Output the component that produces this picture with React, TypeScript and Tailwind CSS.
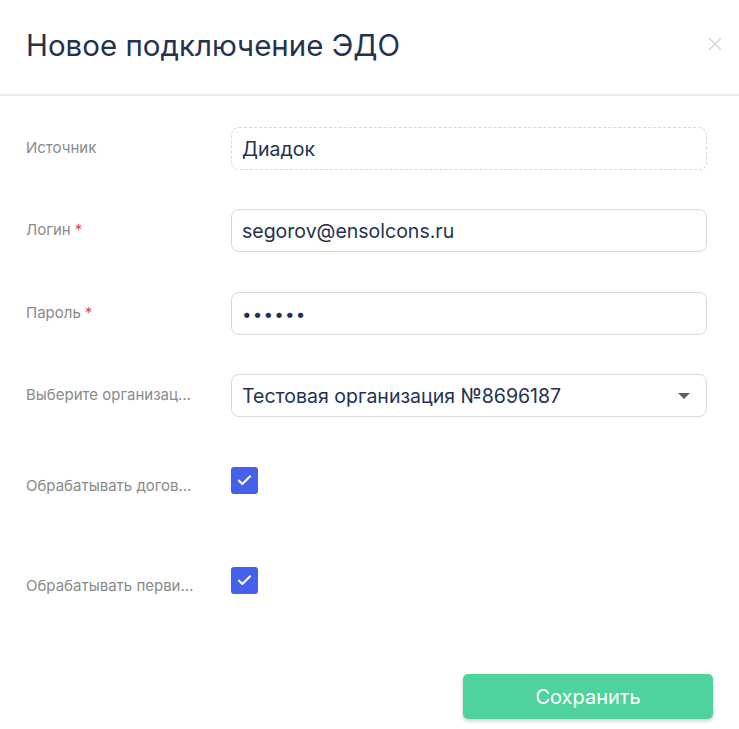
import { Check, X } from 'lucide-react';

const font = { fontFamily: 'Inter, "Noto Sans", sans-serif' };

function Label({ text, required }: { text: string; required?: boolean }) {
  return (
    <div className="w-[204px] shrink-0 pl-[26px] pr-[5px] text-[15px] text-[#8a8a8a] truncate">
      {text}
      {required && <span className="text-[#e5484d] ml-1">*</span>}
    </div>
  );
}

export default function App() {
  return (
    <div className="w-[739px] h-[729px] bg-white text-[#24324f]" style={font}>
      <div className="relative h-[94px] flex items-center px-[26px]">
        <h1 className="text-[29.5px] mt-[-3px]">Новое подключение ЭДО</h1>
        <button className="absolute right-[13px] top-[33px] text-[#cdd2de]">
          <X size={22} strokeWidth={1.4} />
        </button>
      </div>
      <div className="h-[2px] bg-[#eeeeee]" />

      <div className="pt-[31px] pr-[32px] flex flex-col">
        <div className="flex items-center h-[43px]">
          <Label text="Источник" />
          <div className="flex-1 ml-[27px] h-[43px] rounded-[8px] border border-dashed border-[#d5d9e1] flex items-center px-[10px] pt-[3px] text-[19.5px]">
            Диадок
          </div>
        </div>

        <div className="flex items-center h-[43px] mt-[39px]">
          <Label text="Логин" required />
          <div className="flex-1 ml-[27px] h-[43px] rounded-[8px] border border-[#d5d9e1] flex items-center px-[10px] pt-[3px] text-[19.5px]">
            segorov@ensolcons.ru
          </div>
        </div>

        <div className="flex items-center h-[43px] mt-[40px]">
          <Label text="Пароль" required />
          <div className="flex-1 ml-[27px] h-[43px] rounded-[8px] border border-[#d5d9e1] flex items-center px-[10px] pt-[2px] text-[17px] tracking-[1.2px]">
            ••••••
          </div>
        </div>

        <div className="flex items-center h-[43px] mt-[39px]">
          <Label text="Выберите организацию" />
          <div className="flex-1 ml-[27px] h-[43px] rounded-[8px] border border-[#d5d9e1] flex items-center justify-between pl-[10px] pr-[16px] pt-[3px] text-[19.5px]">
            <span>Тестовая организация №8696187</span>
            <span className="w-0 h-0 mb-[3px] border-l-[6px] border-r-[6px] border-t-[6px] border-l-transparent border-r-transparent border-t-[#606060]" />
          </div>
        </div>

        <div className="flex items-center mt-[50px]">
          <Label text="Обрабатывать договоры" />
          <div className="ml-[27px] mb-[12px] w-[27px] h-[27px] rounded-[3px] bg-[#4560ea] flex items-center justify-center text-white">
            <Check size={17} strokeWidth={2.8} />
          </div>
        </div>

        <div className="flex items-center mt-[61px]">
          <Label text="Обрабатывать первичные документы" />
          <div className="ml-[27px] mb-[12px] w-[27px] h-[27px] rounded-[3px] bg-[#4560ea] flex items-center justify-center text-white">
            <Check size={17} strokeWidth={2.8} />
          </div>
        </div>
      </div>

      <div className="flex justify-end pr-[26px] mt-[68px]">
        <button className="w-[250px] h-[45px] rounded-[5px] bg-[#50d29c] text-white text-[20px] shadow-[0_2px_4px_rgba(0,0,0,0.2)]">
          Сохранить
        </button>
      </div>
    </div>
  );
}
